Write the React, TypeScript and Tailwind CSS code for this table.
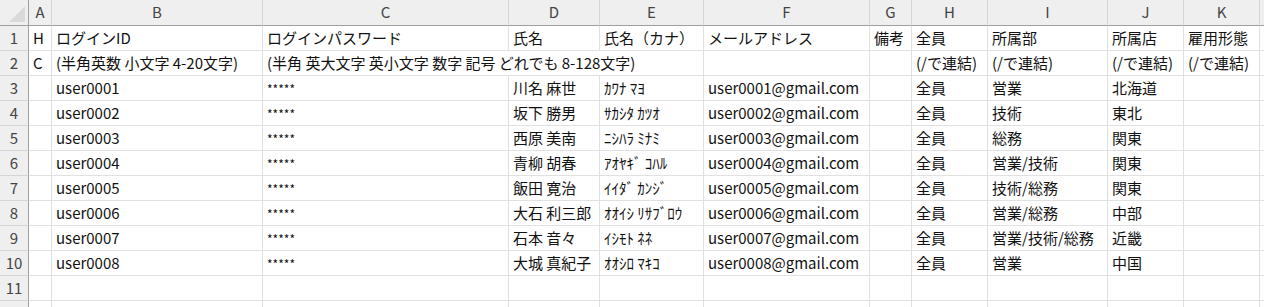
import React from "react";

const COLS = ["A", "B", "C", "D", "E", "F", "G", "H", "I", "J", "K", ""];

const rows: string[][] = [
    ["H", "ログインID", "ログインパスワード", "氏名", "氏名（カナ）", "メールアドレス", "備考", "全員", "所属部", "所属店", "雇用形態", ""],
    ["C", "(半角英数 小文字 4-20文字)", "(半角 英大文字 英小文字 数字 記号 どれでも 8-128文字)", "", "", "", "", "(/で連結)", "(/で連結)", "(/で連結)", "(/で連結)", ""],
    ["", "user0001", "*****", "川名 麻世", "ｶﾜﾅ ﾏﾖ", "user0001@gmail.com", "", "全員", "営業", "北海道", "", ""],
    ["", "user0002", "*****", "坂下 勝男", "ｻｶｼﾀ ｶﾂｵ", "user0002@gmail.com", "", "全員", "技術", "東北", "", ""],
    ["", "user0003", "*****", "西原 美南", "ﾆｼﾊﾗ ﾐﾅﾐ", "user0003@gmail.com", "", "全員", "総務", "関東", "", ""],
    ["", "user0004", "*****", "青柳 胡春", "ｱｵﾔｷﾞ ｺﾊﾙ", "user0004@gmail.com", "", "全員", "営業/技術", "関東", "", ""],
    ["", "user0005", "*****", "飯田 寛治", "ｲｲﾀﾞ ｶﾝｼﾞ", "user0005@gmail.com", "", "全員", "技術/総務", "関東", "", ""],
    ["", "user0006", "*****", "大石 利三郎", "ｵｵｲｼ ﾘｻﾌﾞﾛｳ", "user0006@gmail.com", "", "全員", "営業/総務", "中部", "", ""],
    ["", "user0007", "*****", "石本 音々", "ｲｼﾓﾄ ﾈﾈ", "user0007@gmail.com", "", "全員", "営業/技術/総務", "近畿", "", ""],
    ["", "user0008", "*****", "大城 真紀子", "ｵｵｼﾛ ﾏｷｺ", "user0008@gmail.com", "", "全員", "営業", "中国", "", ""],
    ["", "", "", "", "", "", "", "", "", "", "", ""],
    ["", "", "", "", "", "", "", "", "", "", "", ""],
];

function Cell({ text, span }: { text: string; span?: boolean }) {
    const isStars = text === "*****";
    return (
        <div
            className={`h-[25px] border-r border-b border-[#e1e1e1] bg-white pl-[4px] flex items-center whitespace-nowrap overflow-hidden text-[#111] ${span ? "col-span-3" : ""} ${isStars ? "text-[12px] pt-[2px]" : "text-[15px]"}`}
        >
            {text}
        </div>
    );
}

export default function App() {
    return (
        <div
            className="w-[1264px] h-[307px] overflow-hidden bg-white"
            style={{ fontFamily: '"Noto Sans CJK JP", "Noto Sans", sans-serif' }}
        >
            <div className="grid grid-cols-[29px_23px_211px_246px_91px_104px_166px_42px_76px_120px_76px_76px_1fr]">
                {/* corner */}
                <div className="h-[26px] bg-[#efefef] border-r border-b border-[#9f9f9f] flex items-end justify-end p-[3px]">
                    <div className="w-0 h-0 border-l-[16px] border-l-transparent border-b-[16px] border-b-[#dadada]" />
                </div>
                {COLS.map((c, i) => (
                    <div
                        key={i}
                        className="h-[26px] bg-[#efefef] border-r border-r-[#d5d5d5] border-b border-b-[#9f9f9f] flex items-center justify-center text-[15px] text-[#444]"
                    >
                        {c}
                    </div>
                ))}

                {rows.map((r, ri) => (
                    <React.Fragment key={ri}>
                        {/* row 12 is cut off by the window, so no number shows */}
                        <div className="h-[25px] bg-[#efefef] border-r border-r-[#9f9f9f] border-b border-b-[#d5d5d5] flex items-center justify-center text-[15px] text-[#444]">
                            {ri < 11 ? ri + 1 : ""}
                        </div>
                        {ri === 1 ? (
                            <>
                                <Cell text={r[0]} />
                                <Cell text={r[1]} />
                                <Cell text={r[2]} span />
                                {r.slice(5).map((t, ci) => (
                                    <Cell key={ci} text={t} />
                                ))}
                            </>
                        ) : (
                            r.map((t, ci) => <Cell key={ci} text={t} />)
                        )}
                    </React.Fragment>
                ))}
            </div>
        </div>
    );
}
